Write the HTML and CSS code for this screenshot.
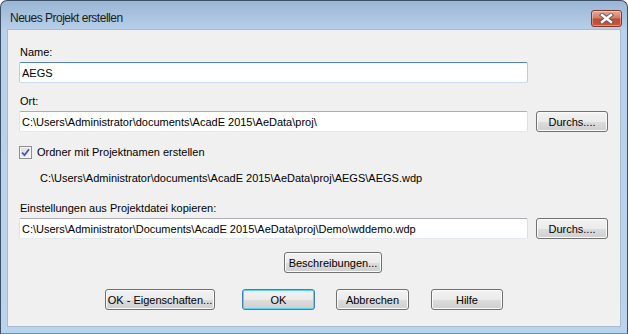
FILE: index.html
```html
<!DOCTYPE html>
<html lang="de">
<head>
    <meta charset="UTF-8">
    <title>Neues Projekt erstellen</title>
    <link rel="stylesheet" href="styles.css">
</head>
<body>
    <div class="window">
        <div class="titlebar">
            <span class="title">Neues Projekt erstellen</span>
            <span class="close-btn">
                <svg width="15" height="11" viewBox="0 0 15 11">
                    <path d="M3 2 L12 9 M12 2 L3 9" stroke="#5a5a5a" stroke-width="4.2" stroke-linecap="square"/>
                    <path d="M3 2 L12 9 M12 2 L3 9" stroke="#ffffff" stroke-width="2.4" stroke-linecap="square"/>
                </svg>
            </span>
        </div>

        <div class="content">
            <label class="field-label first">Name:</label>
            <input type="text" class="textbox focused" value="AEGS">

            <label class="field-label">Ort:</label>
            <div class="field-row">
                <input type="text" class="textbox" value="C:\Users\Administrator\documents\AcadE 2015\AeData\proj\">
                <button class="btn browse-btn">Durchs....</button>
            </div>

            <div class="check-row">
                <span class="checkbox">
                    <svg width="9" height="9" viewBox="0 0 9 9">
                        <path d="M1 4.5 L3.5 7.2 L8 1.2" fill="none" stroke="#3d5aa8" stroke-width="1.8"/>
                    </svg>
                </span>
                <span>Ordner mit Projektnamen erstellen</span>
            </div>

            <div class="path-text">C:\Users\Administrator\documents\AcadE 2015\AeData\proj\AEGS\AEGS.wdp</div>

            <label class="field-label copy-label">Einstellungen aus Projektdatei kopieren:</label>
            <div class="field-row">
                <input type="text" class="textbox" value="C:\Users\Administrator\Documents\AcadE 2015\AeData\proj\Demo\wddemo.wdp">
                <button class="btn browse-btn">Durchs....</button>
            </div>

            <button class="btn desc-btn">Beschreibungen...</button>

            <div class="button-row">
                <button class="btn props-btn">OK - Eigenschaften...</button>
                <button class="btn default-btn ok-btn">OK</button>
                <button class="btn cancel-btn">Abbrechen</button>
                <button class="btn help-btn">Hilfe</button>
            </div>
        </div>
    </div>
</body>
</html>
```

FILE: styles.css
```css
* {
    margin: 0;
    padding: 0;
    box-sizing: border-box;
}

body {
    font-family: 'Liberation Sans', Arial, sans-serif;
    font-size: 11px;
    color: #000;
    background: #ffffff;
}

.window {
    width: 628px;
    height: 334px;
    border: 1px solid #3b4f66;
    border-bottom-color: #1fb3c4;
    border-radius: 7px 7px 0 0;
    background: linear-gradient(180deg, #9ab5d4 0%, #b9d1ea 30px, #bcd3ec 100%);
    padding: 0 7px 7px 7px;
    display: flex;
    flex-direction: column;
}

.titlebar {
    height: 29px;
    display: flex;
    align-items: flex-start;
    justify-content: space-between;
    padding-top: 9px;
}

.title {
    font-size: 12px;
    letter-spacing: -0.5px;
    line-height: 17px;
    padding-left: 2px;
    color: #1b1b1b;
}

.close-btn {
    width: 31px;
    height: 17px;
    margin-right: -2px;
    border: 1px solid #84372c;
    border-radius: 3px;
    background: linear-gradient(180deg, #e9a99a 0%, #d47c66 45%, #c24b31 55%, #c9573b 100%);
    box-shadow: inset 0 0 0 1px rgba(255, 255, 255, 0.35);
    display: flex;
    align-items: center;
    justify-content: center;
}

.content {
    flex: 1;
    background: #f0f0f0;
    padding: 16px 0 0 11px;
    display: flex;
    flex-direction: column;
    align-items: flex-start;
    box-shadow: 0 0 0 1px #a6bbd4;
}

.field-label {
    display: block;
    line-height: 13px;
    padding-left: 1px;
    margin-top: 12px;
}

.field-label.first {
    margin-top: 0;
}

.field-label.copy-label {
    margin-top: 17px;
}

.textbox {
    width: 509px;
    height: 21px;
    margin-top: 3px;
    border: 1px solid;
    border-color: #abadb3 #dbdfe6 #e3e9ef #e2e3ea;
    border-radius: 2px;
    background: #ffffff;
    font-family: inherit;
    font-size: 11px;
    color: #000;
    padding: 0 2px;
    outline: none;
}

.textbox.focused {
    border-color: #5685b3 #b7d0e8 #c7dcef #b7d0e8;
}

.field-row {
    display: flex;
    align-items: center;
    gap: 8px;
    margin-top: 3px;
}

.field-row .textbox {
    margin-top: 0;
}

.btn {
    height: 21px;
    border: 1px solid #707070;
    border-radius: 3px;
    background: linear-gradient(180deg, #f2f2f2 0%, #ebebeb 50%, #dddddd 51%, #cfcfcf 100%);
    box-shadow: inset 0 0 0 1px #fbfbfb;
    font-family: inherit;
    font-size: 11px;
    color: #000;
    cursor: pointer;
}

.browse-btn {
    width: 72px;
}

.check-row {
    display: flex;
    align-items: center;
    gap: 5px;
    margin-top: 14px;
    line-height: 13px;
}

.checkbox {
    width: 13px;
    height: 13px;
    border: 1px solid #8e8f8f;
    background: linear-gradient(135deg, #dcdcdc 0%, #f6f6f6 100%);
    box-shadow: inset 0 0 0 1px #f4f4f4;
    display: flex;
    align-items: center;
    justify-content: center;
}

.path-text {
    line-height: 13px;
    margin-top: 13px;
    padding-left: 21px;
}

.desc-btn {
    width: 98px;
    margin-top: 13px;
    margin-left: 265px;
}

.button-row {
    display: flex;
    margin-top: 16px;
    margin-left: 86px;
}

.props-btn {
    width: 110px;
}

.ok-btn {
    width: 73px;
    margin-left: 27px;
}

.default-btn {
    border-color: #3c7fb1;
    box-shadow: inset 0 0 0 1px #5fd3f5;
}

.cancel-btn {
    width: 73px;
    margin-left: 21px;
}

.help-btn {
    width: 72px;
    margin-left: 22px;
}
```
